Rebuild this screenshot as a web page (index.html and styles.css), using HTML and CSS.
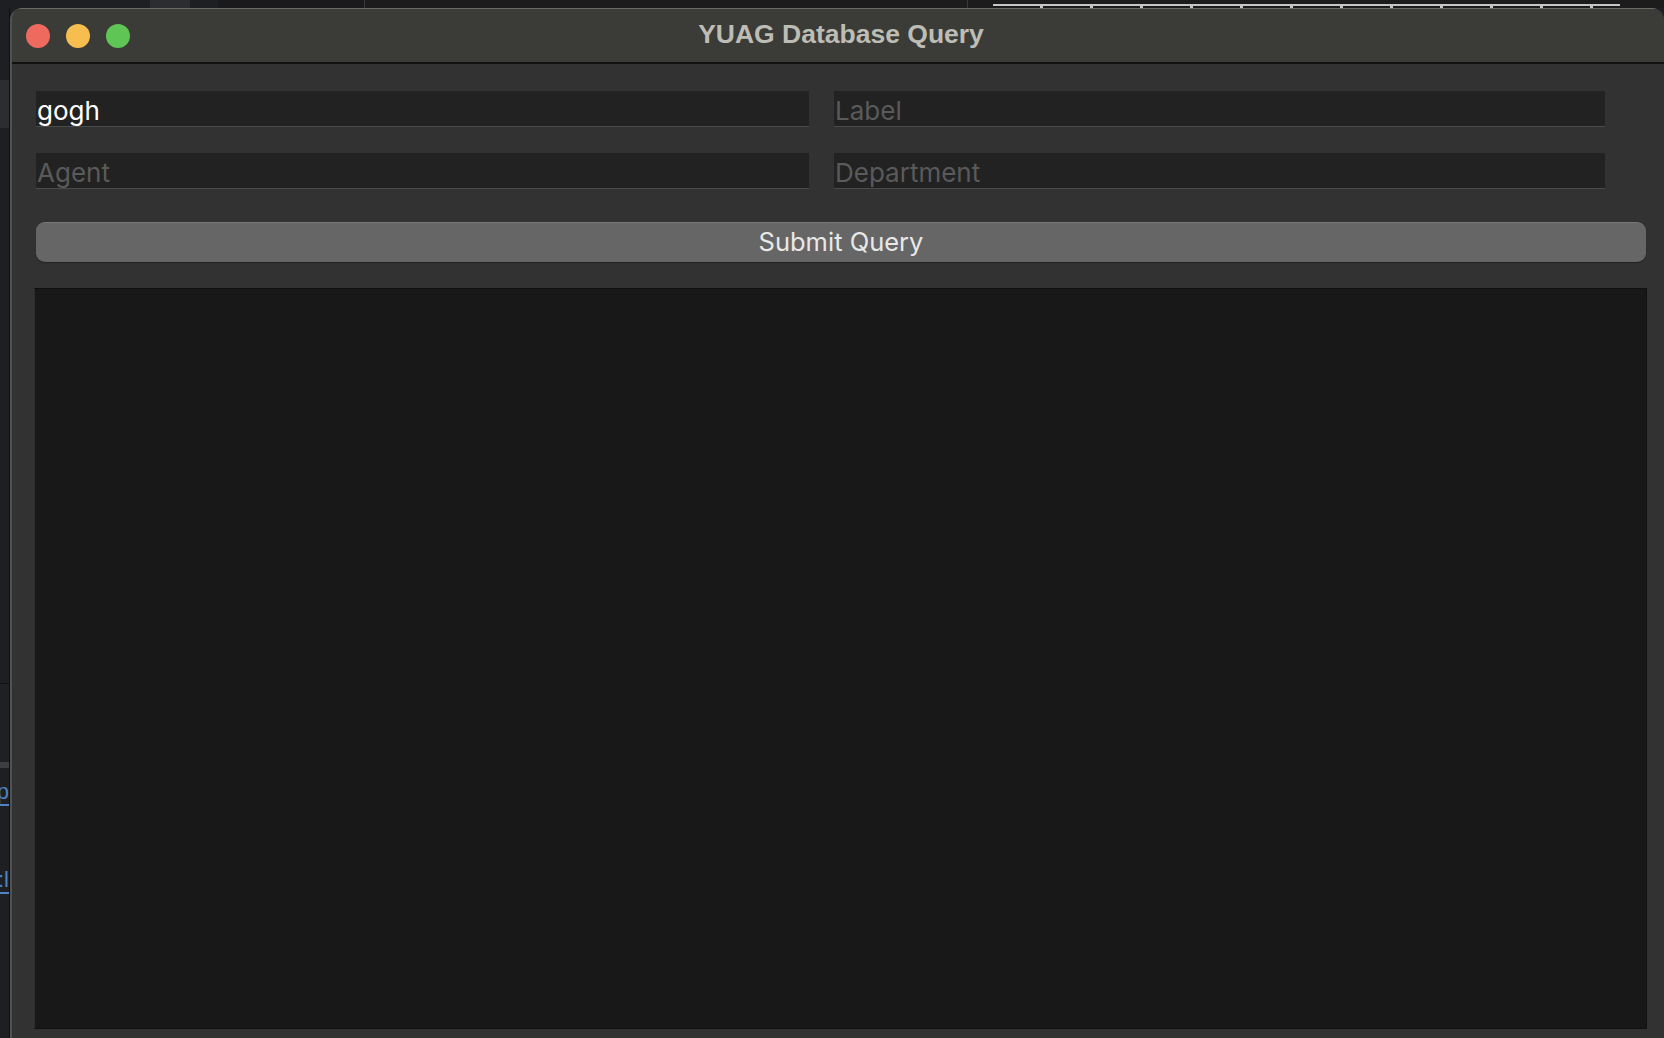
FILE: index.html
```html
<!DOCTYPE html>
<html lang="en">
<head>
<meta charset="utf-8">
<title>YUAG Database Query</title>
<link rel="stylesheet" href="styles.css">
</head>
<body>
<div class="desk">
  <div class="topstrip">
    <div class="ts ts-a"></div>
    <div class="ts ts-b"></div>
    <div class="ts ts-c"></div>
    <div class="ts ts-d"></div>
    <div class="ts ts-e"></div>
    <div class="ts ts-f"><div class="ruler"></div></div>
  </div>
  <div class="leftstrip">
    <div class="ls ls-1"></div>
    <div class="ls ls-2"></div>
    <div class="ls ls-3"></div>
    <div class="ls ls-4"></div>
    <div class="ls ls-5"></div>
    <div class="ls-link ls-link1">p.</div>
    <div class="ls-gap"></div>
    <div class="ls-link ls-link2">t:l</div>
  </div>
  <div class="window">
    <div class="titlebar">
      <div class="lights">
        <span class="light red"></span>
        <span class="light yellow"></span>
        <span class="light green"></span>
      </div>
      <div class="title">YUAG Database Query</div>
      <div class="spacer"></div>
    </div>
    <div class="content">
      <div class="fields">
        <input class="field" type="text" value="gogh">
        <input class="field" type="text" placeholder="Label">
        <input class="field" type="text" placeholder="Agent">
        <input class="field" type="text" placeholder="Department">
      </div>
      <button class="submit" type="button">Submit Query</button>
      <div class="output"></div>
    </div>
  </div>
</div>
</body>
</html>
```

FILE: styles.css
```css
* { box-sizing: border-box; }

html, body {
  margin: 0;
  padding: 0;
  width: 1664px;
  height: 1038px;
  overflow: hidden;
  background: #1e1f22;
}

.desk {
  width: 1664px;
  height: 1038px;
  display: grid;
  grid-template-columns: 10px 1fr;
  grid-template-rows: 8px 1fr;
}

/* top strip of the desktop behind the window */
.topstrip {
  grid-column: 1 / 3;
  grid-row: 1;
  display: flex;
  height: 8px;
  overflow: hidden;
}
.ts { height: 8px; }
.ts-a { width: 150px; background: #1e1f22; }
.ts-b { width: 40px; background: #2b2d30; }
.ts-c { width: 28px; background: #1e1f22; }
.ts-d { width: 147px; background: #1a1a1c; border-right: 1px solid #3a3a3c; }
.ts-e { width: 603px; background: #1c1c1d; border-right: 1px solid #3a3a3c; }
.ts-f { flex: 1; background: #1c1c1d; padding: 4px 44px 0 25px; }
.ruler {
  height: 4px;
  border-top: 2px solid #c6c6c6;
  background: repeating-linear-gradient(90deg, transparent 0 47px, #c6c6c6 47px 50px);
}

/* left strip of the desktop behind the window */
.leftstrip {
  grid-column: 1;
  grid-row: 2;
  display: flex;
  flex-direction: column;
  border-right: 1px solid #111;
  overflow: hidden;
}
.ls-1 { height: 72px; background: #1e1f22; }
.ls-2 { height: 48px; background: #2b2d30; }
.ls-3 { height: 556px; background: #1e1f22; border-bottom: 1px solid #111; }
.ls-4 { height: 78px; background: #1f2023; }
.ls-5 { height: 6px; background: #3c3e42; }
.ls-link {
  font-family: "Liberation Sans", sans-serif;
  font-size: 22px;
  line-height: 24px;
  color: #4d84c4;
  white-space: nowrap;
  direction: rtl;
  border-bottom: 2px solid #4d84c4;
  margin-top: 12px;
}
.ls-gap { height: 50px; }

/* window */
.window {
  grid-column: 2;
  grid-row: 2;
  display: flex;
  flex-direction: column;
  background: #323232;
  border-left: 2px solid #525252;
  border-radius: 12px 12px 0 0;
  overflow: hidden;
}

.titlebar {
  height: 56px;
  display: grid;
  grid-template-columns: 1fr auto 1fr;
  align-items: center;
  background: #3b3c38;
  border-top: 1px solid #6a6b66;
  border-bottom: 2px solid #121212;
  padding-left: 6px;
}

.lights {
  display: flex;
  gap: 16px;
  padding-left: 8px;
}
.light {
  width: 24px;
  height: 24px;
  border-radius: 50%;
  display: block;
}
.red { background: #ee6a5f; }
.yellow { background: #f5be4f; }
.green { background: #5fc554; }

.title {
  font-family: "Liberation Sans", Arial, sans-serif;
  font-weight: bold;
  font-size: 26.5px;
  line-height: 30px;
  color: #bdbdb5;
  padding-bottom: 3px;
}

.content {
  flex: 1;
  display: flex;
  flex-direction: column;
  padding: 27px 18px 9px 24px;
}

.fields {
  display: grid;
  grid-template-columns: 773px 771px;
  column-gap: 25px;
  row-gap: 26px;
}

.field {
  height: 36px;
  margin: 0;
  border: 0;
  border-bottom: 1px solid #4b4b4b;
  border-radius: 0;
  background: #222222;
  color: #ffffff;
  font-family: Inter, "Noto Sans", sans-serif;
  font-size: 26px;
  padding: 3px 1px 0 1px;
  outline: none;
}
.field::placeholder { color: #5a5a5a; }

.submit {
  margin-top: 33px;
  height: 40px;
  border: 0;
  border-top: 1px solid #777777;
  border-radius: 9px;
  background: #666666;
  box-shadow: 0 1px 1px rgba(0,0,0,0.35);
  color: #e8e8e8;
  font-family: Inter, "Noto Sans", sans-serif;
  font-size: 25.5px;
  padding: 0 0 3px 0;
}

.output {
  flex: 1;
  margin: 26px -1px 0 -2px;
  background: #181818;
  border: 1px solid #101010;
  border-left-color: #2e2e2e;
}
```
